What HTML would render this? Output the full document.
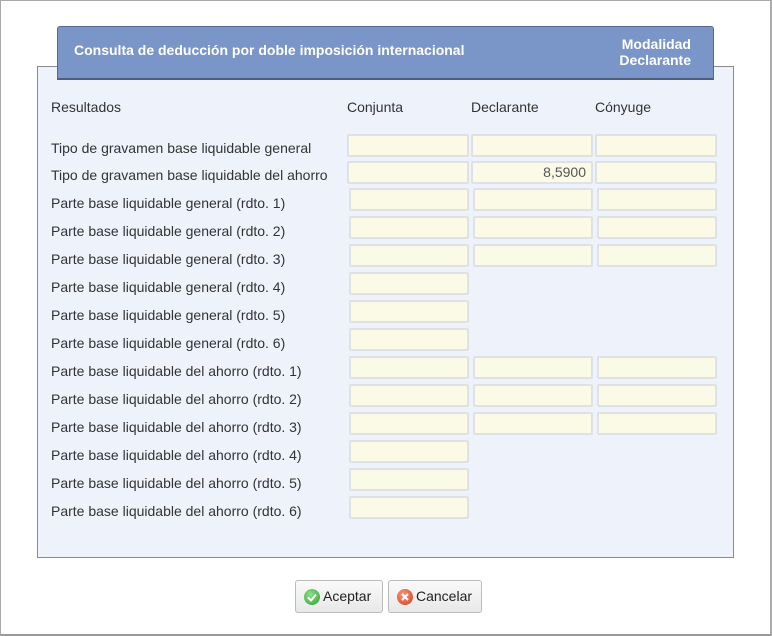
<!DOCTYPE html>
<html><head><meta charset="utf-8"><style>
*{box-sizing:border-box;margin:0;padding:0}
body{width:772px;height:636px;background:#fff;font-family:"Liberation Sans",sans-serif;position:relative;overflow:hidden}
.frame{position:absolute;left:0;top:0;width:772px;height:636px;border:1px solid #a9a9a9;border-bottom:2px solid #999;border-right:2px solid #aaa}
.panel{position:absolute;left:37px;top:66px;width:697px;height:492px;background:#eef2fa;border:1px solid #8a8a8a}
.hdr{position:absolute;left:57px;top:26px;width:657px;height:54px;background:#7a95c7;border:1px solid #566a8f;border-bottom:2px solid #4d5f80;border-radius:3px 3px 0 0;color:#fff;font-weight:bold;font-size:14px}
.hdr .t{position:absolute;left:16px;top:15px}
.hdr .m{position:absolute;right:22px;top:9px;text-align:right;line-height:16px}
.l{position:absolute;left:51px;font-size:14px;color:#333}
.c{position:absolute;font-size:14px;color:#333;top:99px}
.i{position:absolute;height:23px;background:#fafae6;border:2px solid #dfe2e4;border-radius:2px;font-size:14px;color:#555;text-align:right;padding-right:5px;line-height:19px}
.b{position:absolute;top:580px;height:33px;border:1px solid #bbb;border-radius:3px;background:linear-gradient(#fafafa,#e8e8e8);font-size:14px;color:#222;line-height:31px;padding-left:27px}
.ic{position:absolute;left:8px;top:8px;width:16px;height:16px;border-radius:50%;display:block}
.ic svg{display:block}
</style></head><body>
<div class="frame"></div>
<div class="panel"></div>
<div class="hdr"><span class="t">Consulta de deducción por doble imposición internacional</span><span class="m">Modalidad<br>Declarante</span></div>
<div class="l" style="top:99px">Resultados</div>
<div class="c" style="left:347px">Conjunta</div>
<div class="c" style="left:471px">Declarante</div>
<div class="c" style="left:595px">Cónyuge</div>
<div class="l" style="top:140px">Tipo de gravamen base liquidable general</div>
<div class="l" style="top:167px">Tipo de gravamen base liquidable del ahorro</div>
<div class="i" style="left:347px;top:134px;width:122px"></div>
<div class="i" style="left:471px;top:134px;width:122px"></div>
<div class="i" style="left:595px;top:134px;width:122px"></div>
<div class="i" style="left:347px;top:161px;width:122px"></div>
<div class="i" style="left:471px;top:161px;width:122px">8,5900</div>
<div class="i" style="left:595px;top:161px;width:122px"></div>
<div class="l" style="top:195px">Parte base liquidable general (rdto. 1)</div>
<div class="l" style="top:223px">Parte base liquidable general (rdto. 2)</div>
<div class="l" style="top:251px">Parte base liquidable general (rdto. 3)</div>
<div class="l" style="top:279px">Parte base liquidable general (rdto. 4)</div>
<div class="l" style="top:307px">Parte base liquidable general (rdto. 5)</div>
<div class="l" style="top:335px">Parte base liquidable general (rdto. 6)</div>
<div class="l" style="top:363px">Parte base liquidable del ahorro (rdto. 1)</div>
<div class="l" style="top:391px">Parte base liquidable del ahorro (rdto. 2)</div>
<div class="l" style="top:419px">Parte base liquidable del ahorro (rdto. 3)</div>
<div class="l" style="top:447px">Parte base liquidable del ahorro (rdto. 4)</div>
<div class="l" style="top:475px">Parte base liquidable del ahorro (rdto. 5)</div>
<div class="l" style="top:503px">Parte base liquidable del ahorro (rdto. 6)</div>
<div class="i" style="left:349px;top:188px;width:120px"></div><div class="i" style="left:473px;top:188px;width:120px"></div><div class="i" style="left:597px;top:188px;width:120px"></div>
<div class="i" style="left:349px;top:216px;width:120px"></div><div class="i" style="left:473px;top:216px;width:120px"></div><div class="i" style="left:597px;top:216px;width:120px"></div>
<div class="i" style="left:349px;top:244px;width:120px"></div><div class="i" style="left:473px;top:244px;width:120px"></div><div class="i" style="left:597px;top:244px;width:120px"></div>
<div class="i" style="left:349px;top:272px;width:120px"></div>
<div class="i" style="left:349px;top:300px;width:120px"></div>
<div class="i" style="left:349px;top:328px;width:120px"></div>
<div class="i" style="left:349px;top:356px;width:120px"></div><div class="i" style="left:473px;top:356px;width:120px"></div><div class="i" style="left:597px;top:356px;width:120px"></div>
<div class="i" style="left:349px;top:384px;width:120px"></div><div class="i" style="left:473px;top:384px;width:120px"></div><div class="i" style="left:597px;top:384px;width:120px"></div>
<div class="i" style="left:349px;top:412px;width:120px"></div><div class="i" style="left:473px;top:412px;width:120px"></div><div class="i" style="left:597px;top:412px;width:120px"></div>
<div class="i" style="left:349px;top:440px;width:120px"></div>
<div class="i" style="left:349px;top:468px;width:120px"></div>
<div class="i" style="left:349px;top:496px;width:120px"></div>
<div class="b" style="left:295px;width:88px"><span class="ic" style="background:radial-gradient(circle at 40% 35%,#8fe08a,#2e9e2e)"><svg width="16" height="16"><path d="M4 8.5l3 3 5-6" stroke="#fff" stroke-width="2" fill="none"/></svg></span>Aceptar</div>
<div class="b" style="left:388px;width:94px"><span class="ic" style="background:radial-gradient(circle at 40% 35%,#f59a7a,#d43a1a)"><svg width="16" height="16"><path d="M5 5l6 6M11 5l-6 6" stroke="#fff" stroke-width="2"/></svg></span>Cancelar</div>
</body></html>
